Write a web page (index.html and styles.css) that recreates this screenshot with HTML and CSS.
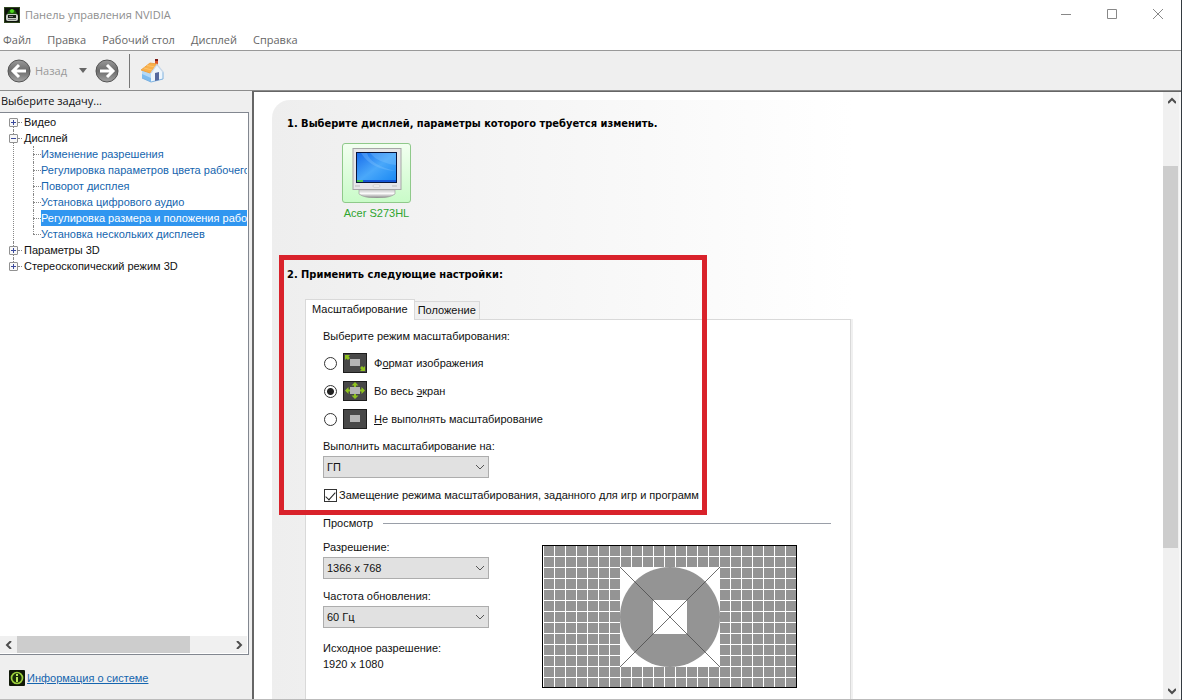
FILE: index.html
```html
<!DOCTYPE html>
<html lang="ru">
<head>
<meta charset="utf-8">
<title>Панель управления NVIDIA</title>
<link rel="stylesheet" href="styles.css">
</head>
<body>
<div class="window">
  <header class="titlebar">
    <svg class="app-icon" viewBox="0 0 16 16" width="16" height="16" aria-hidden="true">
      <rect width="16" height="16" fill="#0d120b"/>
      <rect x=".5" y=".5" width="15" height="15" fill="none" stroke="#30451f"/>
      <path d="M3 7l2-4h6l2 4z" fill="#1d5a0d"/>
      <circle cx="8" cy="4" r="2" fill="#4fdc1c"/>
      <rect x="2" y="7" width="12" height="7" rx="2" fill="#c9cfc6"/>
      <rect x="4" y="8" width="8" height="3" fill="#172015"/>
      <path d="M5 9.500h4M4 12.500h8" stroke="#777" fill="none"/>
    </svg>
    <h1 class="title">Панель управления NVIDIA</h1>
    <div class="window-buttons">
      <button class="win-btn" aria-label="Свернуть"><svg viewBox="0 0 12 12" width="12" height="12"><path d="M1 5.500h10"/></svg></button>
      <button class="win-btn" aria-label="Развернуть"><svg viewBox="0 0 12 12" width="12" height="12"><path d="M1.500 .5h9v9h-9z"/></svg></button>
      <button class="win-btn" aria-label="Закрыть"><svg viewBox="0 0 12 12" width="12" height="12"><path d="M1 0l10 10M11 0L1 10"/></svg></button>
    </div>
  </header>
  <nav class="menubar">
    <button class="menu">Файл</button>
    <button class="menu">Правка</button>
    <button class="menu">Рабочий стол</button>
    <button class="menu">Дисплей</button>
    <button class="menu">Справка</button>
  </nav>
  <div class="toolbar">
    <svg width="0" height="0" class="defs" aria-hidden="true"><defs>
      <linearGradient id="orb" x1="0" y1="0" x2="0" y2="1"><stop offset="0" stop-color="#999"/><stop offset=".5" stop-color="#6b6b6b"/><stop offset="1" stop-color="#a4a4a4"/></linearGradient>
    </defs></svg>
    <button class="tool back">
      <svg viewBox="0 0 24 24" width="24" height="24"><circle cx="12" cy="12" r="11" fill="url(#orb)" stroke="#555"/><path d="M19 12H7M12 6l-6 6 6 6" fill="none" stroke="#fff" stroke-width="3"/></svg>
      <span>Назад</span>
    </button>
    <button class="tool drop" aria-label="Журнал"><svg viewBox="0 0 8 5" width="8" height="5"><path d="M0 0h8L4 5z" fill="#666"/></svg></button>
    <button class="tool" aria-label="Вперед">
      <svg viewBox="0 0 24 24" width="24" height="24"><circle cx="12" cy="12" r="11" fill="url(#orb)" stroke="#555"/><path d="M5 12h12M12 6l6 6-6 6" fill="none" stroke="#fff" stroke-width="3"/></svg>
    </button>
    <span class="separator"></span>
    <button class="tool" aria-label="Домой">
      <svg viewBox="0 0 24 24" width="24" height="24">
        <path d="M2 11l9 3v9l-9-4z" fill="#b4d9f7"/>
        <path d="M2 15l9 4v4l-9-4z" fill="#7dbcf0"/>
        <path d="M11 14l6-8 6 7v7l-12 3z" fill="#edf5fc"/>
        <path d="M23 13v7l-12 3-9-4" fill="none" stroke="#7fb2e0"/>
        <path d="M15 1h3v6l-3-2z" fill="#d9532c"/><path d="M15 0h3v2h-3z" fill="#7d1a16"/>
        <path d="M10 4l7 1-7 9-9-3z" fill="#f9b04a" stroke="#ee9a35" stroke-width=".8"/>
        <path d="M4 9l8 2M7 6.500l8 1.500" stroke="#fcc978" stroke-width=".8"/>
        <path d="M11 14l6-8.500 6.500 8" fill="none" stroke="#c9d8e8" stroke-width="1.200"/>
        <path d="M15 14l4-1v8l-4 1z" fill="#56699e"/>
      </svg>
    </button>
  </div>
  <div class="main">
    <aside class="sidebar">
      <h2 class="side-title">Выберите задачу...</h2>
      <div class="tree-box">
        <ul class="tree">
          <li><button class="toggle plus" aria-label="Развернуть"></button><span class="node">Видео</span></li>
          <li><button class="toggle" aria-label="Свернуть"></button><span class="node">Дисплей</span>
            <ul class="subtree">
              <li><a href="#">Изменение разрешения</a></li>
              <li><a href="#">Регулировка параметров цвета рабочего стола</a></li>
              <li><a href="#">Поворот дисплея</a></li>
              <li><a href="#">Установка цифрового аудио</a></li>
              <li><a href="#" class="selected">Регулировка размера и положения рабочего стола</a></li>
              <li><a href="#">Установка нескольких дисплеев</a></li>
            </ul>
          </li>
          <li><button class="toggle plus" aria-label="Развернуть"></button><span class="node">Параметры 3D</span></li>
          <li><button class="toggle plus" aria-label="Развернуть"></button><span class="node">Стереоскопический режим 3D</span></li>
        </ul>
        <div class="hscroll">
          <button class="arrow" aria-label="Влево"><svg viewBox="0 0 8 8" width="8" height="8"><path d="M6 0L2 4l4 4"/></svg></button>
          <div class="track"><div class="thumb"></div></div>
          <button class="arrow" aria-label="Вправо"><svg viewBox="0 0 8 8" width="8" height="8"><path d="M2 0l4 4-4 4"/></svg></button>
        </div>
      </div>
      <div class="sysinfo">
        <svg viewBox="0 0 16 16" width="16" height="16" aria-hidden="true"><rect width="16" height="16" rx="1" fill="#101808"/><circle cx="8" cy="8" r="5.500" fill="#172b09" stroke="#9bd03a" stroke-width="1.700"/><path d="M8 4v2M8 7v5" stroke="#b9e858" stroke-width="2"/></svg>
        <a href="#">Информация о системе</a>
      </div>
    </aside>
    <main class="content">
      <div class="page">
        <section class="sheet">
          <h2 class="step">1. Выберите дисплей, параметры которого требуется изменить.</h2>
          <button class="display">
            <span class="display-frame">
              <svg viewBox="0 0 50 50" width="50" height="50" aria-hidden="true">
                <defs>
                  <linearGradient id="scr" x1="0" y1="0" x2="1" y2="1"><stop offset="0" stop-color="#176bea"/><stop offset=".5" stop-color="#4aa8fa"/><stop offset="1" stop-color="#1686f3"/></linearGradient>
                  <linearGradient id="foot" x1="0" y1="0" x2="0" y2="1"><stop offset="0" stop-color="#bbb"/><stop offset=".5" stop-color="#fafafa"/><stop offset="1" stop-color="#888"/></linearGradient>
                </defs>
                <path d="M7 41h36v5q-5 4-18 4T7 46z" fill="url(#foot)" stroke="#999" stroke-width=".6"/>
                <rect x="1" y=".5" width="48" height="41" fill="#e6e6e8" stroke="#a6a6a6"/>
                <rect x="4.500" y="4.500" width="40" height="30" fill="url(#scr)" stroke="#08153c"/>
                <path d="M5 5h10q3 12 29 18v-6Q26 15 18 5h26v18Q20 22 9 5z" fill="#8bcbff" opacity=".3"/>
                <path d="M5 32h39v2H5z" fill="#1557d6"/><path d="M5 32h6v2H5z" fill="#4cc552"/>
                <path d="M3 38h5M40 38h5" stroke="#bbb"/><rect x="21" y="37" width="7" height="2" rx="1" fill="#fff" stroke="#bbb" stroke-width=".6"/>
              </svg>
            </span>
            <span>Acer S273HL</span>
          </button>
          <div class="settings">
            <h2 class="step">2. Применить следующие настройки:</h2>
            <div class="tabs" role="tablist">
              <button class="tab active" role="tab" aria-selected="true">Масштабирование</button>
              <button class="tab" role="tab" aria-selected="false">Положение</button>
            </div>
            <div class="panel" role="tabpanel">
              <fieldset class="modes">
                <legend>Выберите режим масштабирования:</legend>
                <label class="mode"><input type="radio" name="mode">
                  <svg viewBox="0 0 24 20" width="24" height="20"><rect x=".5" y=".5" width="23" height="19" fill="#484848" stroke="#1d1d1d"/><rect x="7" y="6" width="10" height="7" fill="#b5b5b5"/><path d="M2 2h5L5.500 3.500 7 5 5 7 3.500 5.500 2 7zM22 18h-5l1.500-1.500L17 15l2-2 1.500 1.500L22 13z" fill="#8fc31f"/></svg>
                  <span>Ф<u>о</u>рмат изображения</span></label>
                <label class="mode"><input type="radio" name="mode" checked>
                  <svg viewBox="0 0 24 20" width="24" height="20"><rect x=".5" y=".5" width="23" height="19" fill="#484848" stroke="#1d1d1d"/><rect x="7" y="6" width="10" height="7" fill="#b5b5b5"/><path d="M12 1l3.500 3.500H13V6h-2V4.500H8.500zM12 18l3.500-3.500H13V13h-2v1.500H8.500zM2 9.500L5.500 6v2.500H7v2H5.500V13zM22 9.500L18.500 6v2.500H17v2h1.500V13z" fill="#8fc31f"/></svg>
                  <span>Во весь <u>э</u>кран</span></label>
                <label class="mode"><input type="radio" name="mode">
                  <svg viewBox="0 0 24 20" width="24" height="20"><rect x=".5" y=".5" width="23" height="19" fill="#484848" stroke="#1d1d1d"/><rect x="7" y="6" width="10" height="7" fill="#b5b5b5"/></svg>
                  <span><u>Н</u>е выполнять масштабирование</span></label>
              </fieldset>
              <div class="field">
                <label for="device">Выполнить масштабирование на:</label>
                <div class="combo"><select id="device"><option>ГП</option></select><svg viewBox="0 0 10 6" width="10" height="6"><path d="M1 1l4 4 4-4"/></svg></div>
              </div>
              <label class="override"><input type="checkbox" checked><span>Замещение режима масштабирования, заданного для игр и программ</span></label>
              <h3 class="group">Просмотр</h3>
              <div class="preview">
                <div class="preview-fields">
                  <div class="field">
                    <label for="res">Разрешение:</label>
                    <div class="combo"><select id="res"><option>1366 x 768</option></select><svg viewBox="0 0 10 6" width="10" height="6"><path d="M1 1l4 4 4-4"/></svg></div>
                  </div>
                  <div class="field">
                    <label for="rate">Частота обновления:</label>
                    <div class="combo"><select id="rate"><option>60 Гц</option></select><svg viewBox="0 0 10 6" width="10" height="6"><path d="M1 1l4 4 4-4"/></svg></div>
                  </div>
                  <p class="native">Исходное разрешение:<br>1920 x 1080</p>
                </div>
                <svg class="pattern" viewBox="0 0 255 143" width="255" height="143" role="img" aria-label="Просмотр">
                  <defs><pattern id="grid" x="1" y="0" width="11" height="11" patternUnits="userSpaceOnUse"><rect width="11" height="11" fill="#949494"/><path d="M0 .5h11M.5 0v11" stroke="#fff"/></pattern></defs>
                  <rect width="255" height="143" fill="url(#grid)"/>
                  <rect x="78" y="22" width="100" height="100" fill="#fff"/>
                  <circle cx="128" cy="72" r="50" fill="#949494"/>
                  <rect x="111" y="55" width="34" height="34" fill="#fff"/>
                  <path d="M78 22l100 100M178 22L78 122" stroke="#4a4a4a" stroke-width=".8"/>
                  <rect x=".5" y=".5" width="254" height="142" fill="none" stroke="#000"/>
                </svg>
              </div>
            </div>
            <div class="highlight"></div>
          </div>
        </section>
      </div>
      <div class="vscroll">
        <button class="arrow" aria-label="Вверх"><svg viewBox="0 0 8 8" width="8" height="8"><path d="M0 6l4-4 4 4"/></svg></button>
        <div class="track"><div class="thumb"></div></div>
        <button class="arrow" aria-label="Вниз"><svg viewBox="0 0 8 8" width="8" height="8"><path d="M0 2l4 4 4-4"/></svg></button>
      </div>
    </main>
  </div>
</div>
</body>
</html>
```
FILE: styles.css
```css
* { box-sizing: border-box; }
body {
  margin: 0;
  font: 11px/16px Tahoma, "Liberation Sans", "Noto Sans", sans-serif;
  color: #111;
  background: #fff;
}
h1, h2, h3, p, ul, fieldset { margin: 0; padding: 0; font: inherit; }
ul { list-style: none; }
button, select, input { font: inherit; color: inherit; margin: 0; }
button { border: 0; padding: 0; background: none; }
svg { display: block; flex: none; }

.window {
  display: flex;
  flex-direction: column;
  height: 100vh;
  border-right: 1px solid #333a40;
  overflow: hidden;
}
.titlebar {
  display: flex;
  align-items: center;
  gap: 5px;
  height: 29px;
  padding-left: 4px;
  font-family: "Segoe UI", "Open Sans", sans-serif;
  color: #8e8e8e;
}
.title { flex: 1; }
.window-buttons { display: flex; }
.win-btn { display: grid; place-items: center; width: 46px; height: 28px; }
.win-btn svg { fill: none; stroke: #888; }
.menubar {
  display: flex;
  gap: 16px;
  height: 22px;
  padding-left: 3px;
  border-bottom: 1px solid #999;
  font-family: "Segoe UI", "Open Sans", sans-serif;
  color: #666;
}
.toolbar {
  display: flex;
  align-items: center;
  height: 40px;
  padding-left: 7px;
  background: #efefef;
  border-bottom: 1px solid #8c8c8c;
}
.defs { position: absolute; }
.tool { display: flex; align-items: center; }
.back { gap: 4px; font-family: "Segoe UI", "Open Sans", sans-serif; color: #999; }
.drop { padding: 8px 8px 8px 12px; }
.separator { width: 1px; height: 34px; margin: 0 10px; background: #777; }

.main { flex: 1; display: flex; min-height: 0; padding-bottom: 1px; background: #bbb; }
.sidebar {
  width: 252px;
  flex: none;
  display: flex;
  flex-direction: column;
  background: #efefef;
}
.side-title { padding: 2px 0 3px 1px; font-family: "Open Sans", sans-serif; }
.tree-box {
  flex: 1;
  min-height: 0;
  display: flex;
  flex-direction: column;
  margin-right: 3px;
  padding: 1px 1px 1px 0;
  background: #fff;
  border: 1px solid #828790;
  border-left: 0;
}
.tree { flex: 1; overflow: hidden; padding-left: 9px; }
.tree > li { position: relative; white-space: nowrap; }
.tree > li::before {
  content: "";
  position: absolute;
  left: 4px;
  top: 0;
  bottom: 0;
  border-left: 1px dotted #888;
}
.tree > li:first-child::before { top: 8px; }
.tree > li:last-child::before { bottom: 8px; }
.toggle {
  position: relative;
  float: left;
  width: 9px;
  height: 9px;
  margin-top: 4px;
  border: 1px solid #919191;
  border-radius: 1px;
  background: linear-gradient(#3b4a9c, #3b4a9c) center / 5px 1px no-repeat, #f8f8f8;
}
.plus {
  background: linear-gradient(#3b4a9c, #3b4a9c) center / 5px 1px no-repeat,
    linear-gradient(#3b4a9c, #3b4a9c) center / 1px 5px no-repeat, #f8f8f8;
}
.node { display: flex; align-items: center; gap: 2px; height: 16px; }
.node::before { content: ""; width: 4px; border-top: 1px dotted #888; }
.subtree { padding-left: 24px; }
.subtree li { position: relative; display: flex; align-items: center; height: 16px; }
.subtree li::before { content: ""; flex: none; width: 8px; border-top: 1px dotted #888; }
.subtree li::after { content: ""; position: absolute; left: 0; top: 0; height: 100%; border-left: 1px dotted #888; }
.subtree li:last-child::after { height: 50%; }
.subtree a { flex: 1; min-width: 0; overflow: hidden; color: #1565ae; text-decoration: none; }
.subtree .selected { background: #3096f0; color: #fff; }

.arrow { display: grid; place-items: center; flex: none; width: 17px; height: 17px; }
.arrow svg { fill: none; stroke: #4d4d4d; stroke-width: 2; }
.track { flex: 1; }
.hscroll { display: flex; height: 17px; background: #f0f0f0; }
.hscroll .thumb { width: 81%; height: 100%; background: #cdcdcd; }
.vscroll {
  display: flex;
  flex-direction: column;
  width: 18px;
  flex: none;
  background: #f0f0f0;
  border-right: 2px solid #f7f7f7;
}
.vscroll .track { padding-top: 57px; }
.vscroll .thumb { width: 15px; height: 74%; background: #cdcdcd; }
.sysinfo {
  display: flex;
  align-items: center;
  gap: 2px;
  height: 44px;
  padding: 2px 0 0 9px;
}
.sysinfo a { color: #1565ae; }

.content {
  flex: 1;
  min-width: 0;
  display: flex;
  background: #fff;
  border-left: 2px solid #666;
  border-top: 1px solid #666;
}
.page { flex: 1; min-width: 0; overflow: hidden; padding: 8px 20px 0 18px; }
.sheet {
  min-height: 100%;
  padding: 16px 0 0 15px;
  border-radius: 18px 0 0 0;
  background: linear-gradient(90deg, #eee, #fff 580px);
}
.step { font: bold 11px/16px Tahoma, "DejaVu Sans Condensed", sans-serif; color: #000; }
.display {
  display: flex;
  flex-direction: column;
  align-items: center;
  gap: 2px;
  width: 69px;
  margin: 11px 0 0 55px;
  color: #2fa52f;
  white-space: nowrap;
}
.display-frame {
  display: grid;
  place-items: center;
  width: 69px;
  height: 60px;
  border: 1px solid #8fc98a;
  border-radius: 3px;
  background: linear-gradient(#f2fff0, #c9fbc8);
}
.settings { position: relative; padding-top: 46px; }
.highlight {
  position: absolute;
  left: -8px;
  top: 34px;
  width: 428px;
  height: 260px;
  border: 5px solid #d9222b;
  pointer-events: none;
}
.tabs { display: flex; align-items: flex-end; margin: 16px 0 0 18px; }
.tab {
  height: 18px;
  padding: 0 3px;
  line-height: 17px;
  background: #f0f0f0;
  border: 1px solid #d9d9d9;
  border-width: 1px 1px 0 0;
}
.tab.active {
  position: relative;
  height: 21px;
  margin-bottom: -1px;
  padding: 0 6px 1px;
  background: #fff;
  border-left-width: 1px;
}
.panel {
  max-width: 546px;
  margin-left: 18px;
  padding: 8px 19px 40px 17px;
  background: #fff;
  border: 1px solid #d9d9d9;
  box-shadow: 2px 0 0 #f0f0f0;
}
.modes { border: 0; display: flex; flex-direction: column; }
.modes legend { padding: 0 0 5px; }
.mode { display: flex; align-items: center; height: 28px; padding-left: 1px; }
.mode svg { margin: 0 7px 0 6px; }
input[type="radio"] {
  appearance: none;
  width: 13px;
  height: 13px;
  border: 1px solid #333;
  border-radius: 50%;
  background: #fff;
}
input[type="radio"]:checked { background: radial-gradient(circle, #222 3px, #fff 4px); }
.field { display: flex; flex-direction: column; gap: 2px; width: 166px; white-space: nowrap; }
.modes + .field { padding-top: 5px; }
.combo { position: relative; }
.combo select {
  appearance: none;
  display: block;
  width: 100%;
  height: 22px;
  padding: 0 24px 0 3px;
  border: 1px solid #adadad;
  border-radius: 0;
  background: #e1e1e1;
}
.combo svg { position: absolute; right: 4px; top: 8px; fill: none; stroke: #555; pointer-events: none; }
.override { display: flex; align-items: center; gap: 2px; height: 16px; margin-top: 9px; padding-left: 1px; white-space: nowrap; }
input[type="checkbox"] {
  appearance: none;
  display: grid;
  place-items: center;
  width: 13px;
  height: 13px;
  border: 1px solid #333;
  background: #fff;
}
input[type="checkbox"]:checked::after {
  content: "";
  width: 4px;
  height: 9px;
  margin-bottom: 3px;
  border: solid #222;
  border-width: 0 1px 1px 0;
  transform: rotate(42deg);
}
.group { display: flex; align-items: center; gap: 10px; margin-top: 12px; }
.group::after { content: ""; flex: 1; border-top: 1px solid #9a9fa8; }
.preview { display: flex; gap: 53px; margin-top: 8px; }
.preview-fields { display: flex; flex-direction: column; gap: 9px; }
.native { padding-top: 3px; white-space: nowrap; }
.pattern { margin-top: 6px; }
```
